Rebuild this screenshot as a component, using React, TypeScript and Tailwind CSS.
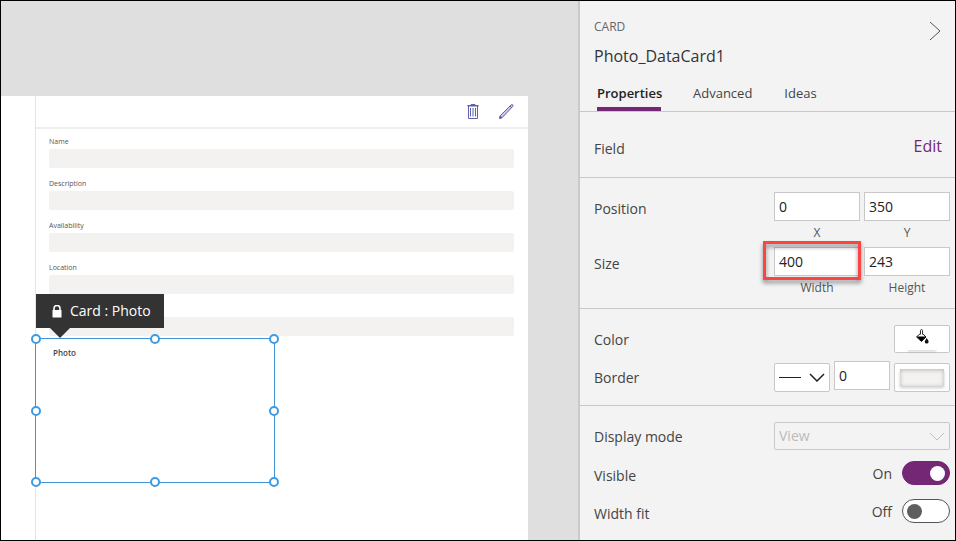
import React from "react";

const formFields = ["Name", "Description", "Availability", "Location", ""];

const handles = [
  "left-0 top-0",
  "left-1/2 top-0",
  "left-full top-0",
  "left-0 top-1/2",
  "left-full top-1/2",
  "left-0 top-full",
  "left-1/2 top-full",
  "left-full top-full",
];

function TrashIcon() {
  return (
    <svg width="12" height="15" viewBox="0 0 12 15" fill="none" stroke="#5f5fae" strokeWidth="1">
      <path d="M0.5 2h11M0.500 1.500h11M4 1.500V0.500h4v1M1.500 2v12.500h9V2M3.500 4v8.500M6 4v8.500M8.500 4v8.500" />
    </svg>
  );
}

function PencilIcon() {
  return (
    <svg width="15" height="15" viewBox="0 0 15 15" fill="none" stroke="#5f5fae" strokeWidth="1">
      <path d="M0.700 14.300l.6-2.600L12 1c.6-.6 1.300-.6 1.700-.2s.5 1.200-.1 1.800L3.200 13.600z" fill="#c9c9e6" />
      <path d="M0.700 14.300l.5-2.300 1.800 1.700zM11 2l2 2" fill="#5f5fae" />
    </svg>
  );
}

function LockIcon() {
  return (
    <svg width="10" height="13" viewBox="0 0 10 13">
      <path d="M2 6V3.500a3 3 0 0 1 6 0V6" fill="none" stroke="#fff" strokeWidth="1.600" />
      <rect x="0.500" y="5" width="9" height="7.500" rx="0.500" fill="#fff" />
    </svg>
  );
}

function PaintIcon() {
  return (
    <svg width="13" height="15" viewBox="0 0 13 15">
      <path d="M5.500 3.500L10 8l-4.500 4.500L0.500 8z" fill="#fff" stroke="#222" strokeWidth="1" />
      <path d="M4.500 5.500V1.500c0-1.300 2-1.300 2 0V5.500" fill="#fff" stroke="#333" strokeWidth="1" />
      <path d="M0.500 7.500h9.500l-4.500 5z" fill="#000" />
      <path d="M10.700 9c.8 1.500 1.900 2.500 1.900 3.700a1.900 1.900 0 0 1-3.800 0c0-1.200 1.200-2.200 1.900-3.700z" fill="#111" />
    </svg>
  );
}

function Chevron({ className }: { className: string }) {
  return (
    <svg className={className} width="16" height="9" viewBox="0 0 16 9" fill="none" stroke="currentColor">
      <path d="M1 1l7 7 7-7" />
    </svg>
  );
}

function Canvas() {
  return (
    <main className="flex min-w-0 flex-1 flex-col bg-[#dfdfdf] pt-[95px]">
      <div className="mr-[50px] flex flex-1 bg-white pl-[34px]">
        <div className="flex-1 border-l border-[#e4e4e4]">
          <div className="flex h-[33px] items-center justify-end gap-5 border-b-2 border-[#efefef] pr-[14px]">
            <button aria-label="Delete"><TrashIcon /></button>
            <button aria-label="Edit item"><PencilIcon /></button>
          </div>
          <div className="flex flex-col gap-3 pt-[9px] pr-[14px] pl-[13px]">
            {formFields.map((name, i) => (
              <label key={i} className="flex flex-col gap-[3px] text-[7px] leading-[8px] text-[#555]">
                <span className="h-2">{name}</span>
                <input readOnly aria-label={name || "Card"} className="h-[19px] w-full rounded-xs bg-[#f3f2f1]" />
              </label>
            ))}
          </div>
          <div className="relative mt-0.5 -ml-px h-[145px] w-[240px] border border-[#3f92d6] bg-white pt-2.5 pl-[17px]">
            <span className="block text-[8px] leading-[8px] font-semibold text-[#444]">Photo</span>
            {handles.map((pos) => (
              <span
                key={pos}
                className={`absolute size-[10px] -translate-1/2 rounded-full border-2 border-[#3f9ae2] bg-white ${pos}`}
              />
            ))}
            <div className="absolute bottom-full left-0 mb-[11px] flex h-[34px] w-32 items-center gap-2 bg-[#333] pl-4 text-sm text-white">
              <LockIcon />
              <span className="whitespace-nowrap">Card : Photo</span>
              <span className="absolute top-full left-[14px] border-x-[10px] border-t-[10px] border-x-transparent border-t-[#333]" />
            </div>
          </div>
        </div>
      </div>
    </main>
  );
}

function NumberField({ id, value, label, marked }: { id: string; value: string; label: string; marked?: boolean }) {
  return (
    <div className="relative w-[86px]">
      <input
        id={id}
        defaultValue={value}
        className="block h-[29px] w-full border border-[#c8c8c8] bg-white px-1 text-sm text-[#222]"
      />
      <label htmlFor={id} className="block pt-[3px] text-center text-xs leading-[17px] text-[#555]">
        {label}
      </label>
      {marked && (
        <span className="pointer-events-none absolute -top-1.5 right-[-1px] -left-[11px] h-[39px] border-3 border-[#fb4444] drop-shadow-[0_3px_2px_rgba(0,0,0,0.45)]" />
      )}
    </div>
  );
}

function Toggle({ id, label, state, on }: { id: string; label: string; state: string; on?: boolean }) {
  return (
    <div className="flex h-6 items-center">
      <label htmlFor={id} className="flex-1 pt-1.5">{label}</label>
      <span className="mr-2.5 pt-0.5">{state}</span>
      <input
        id={id}
        type="checkbox"
        role="switch"
        defaultChecked={on}
        className="flex h-6 w-12 appearance-none items-center rounded-full border border-[#555] bg-white px-1 before:size-[15px] before:rounded-full before:bg-[#605e5c] checked:justify-end checked:border-[#742774] checked:bg-[#742774] checked:before:bg-white"
      />
    </div>
  );
}

function PropertiesPanel() {
  return (
    <aside className="w-[377px] shrink-0 border-l-2 border-[#cacaca] bg-[#f3f3f3] text-sm text-[#444]">
      <header className="border-b border-[#c8c8c8]">
        <div className="flex justify-between pt-4 pr-[14px] pl-[14px]">
          <div>
            <p className="text-xs leading-5 text-[#666]">CARD</p>
            <h1 className="pt-[7px] text-base leading-6 text-[#333]">Photo_DataCard1</h1>
          </div>
          <button aria-label="Collapse panel" className="mt-1 h-5 text-[#555]">
            <svg width="12" height="20" viewBox="0 0 12 20" fill="none" stroke="currentColor">
              <path d="M1 1l10 9-10 9" />
            </svg>
          </button>
        </div>
        <nav className="flex pt-4 pl-[17px] text-[13px] leading-[18px]">
          <button className="mr-8 h-[27px] w-16 border-b-4 border-[#742774] pb-[5px] text-left font-semibold whitespace-nowrap text-[#222]">Properties</button>
          <button className="mr-8 h-[27px] pb-[9px]">Advanced</button>
          <button className="h-[27px] pb-[9px]">Ideas</button>
        </nav>
      </header>

      <section className="flex h-[66px] items-center justify-between border-b border-[#c8c8c8] pr-[13px] pl-[14px]">
        <span className="pt-2">Field</span>
        <button className="pt-0.5 text-base text-[#742774]">Edit</button>
      </section>

      <section className="flex flex-col gap-1.5 border-b border-[#c8c8c8] pt-[14px] pr-[5px] pb-3 pl-[14px]">
        <div className="flex gap-1">
          <span className="flex-1 pt-[7px]">Position</span>
          <NumberField id="pos-x" value="0" label="X" />
          <NumberField id="pos-y" value="350" label="Y" />
        </div>
        <div className="flex gap-1">
          <span className="flex-1 pt-[7px]">Size</span>
          <NumberField id="size-w" value="400" label="Width" marked />
          <NumberField id="size-h" value="243" label="Height" />
        </div>
      </section>

      <section className="flex flex-col gap-2 border-b border-[#c8c8c8] pt-4 pr-[5px] pb-[13px] pl-[14px]">
        <div className="flex">
          <span className="flex-1 pt-[5px]">Color</span>
          <button aria-label="Fill color" className="flex h-7 w-14 flex-col items-center rounded-xs border border-[#c8c8c8] bg-white pt-[3px]">
            <PaintIcon />
            <span className="mt-0.5 h-1 w-7 shadow-[0_2px_2px_rgba(0,0,0,0.12)]" />
          </button>
        </div>
        <div className="flex gap-1">
          <label htmlFor="border-style" className="flex-1 pt-[7px]">Border</label>
          <div className="relative mt-0.5 h-[29px] w-14">
            <select id="border-style" className="size-full appearance-none rounded-xs border border-[#c8c8c8] bg-white text-transparent">
              <option>Solid</option>
            </select>
            <span className="pointer-events-none absolute top-[14px] left-[5px] h-px w-[22px] bg-[#222]" />
            <Chevron className="pointer-events-none absolute top-[10px] right-[5px] stroke-[1.5] text-[#222]" />
          </div>
          <input aria-label="Border width" defaultValue="0" className="h-[29px] w-14 border border-[#c8c8c8] bg-white px-1 text-[#222]" />
          <button aria-label="Border color" className="mt-0.5 h-[29px] w-14 rounded-xs border border-[#c8c8c8] bg-white p-[5px]">
            <span className="block size-full bg-[#f3f2f1] shadow-[0_2px_3px_rgba(0,0,0,0.2),inset_0_1px_4px_rgba(0,0,0,0.25)]" />
          </button>
        </div>
      </section>

      <section className="flex flex-col gap-[14px] pt-4 pr-[5px] pb-3 pl-[14px]">
        <div className="-mb-[3px] flex">
          <label htmlFor="display-mode" className="flex-1 pt-[5px]">Display mode</label>
          <div className="relative h-7 w-[176px]">
            <select id="display-mode" disabled className="size-full appearance-none rounded-xs border border-[#c8c8c8] px-1 text-[#bbb] opacity-100">
              <option>View</option>
            </select>
            <Chevron className="pointer-events-none absolute top-[10px] right-[5px] text-[#c0c0c0]" />
          </div>
        </div>
        <Toggle id="visible" label="Visible" state="On" on />
        <Toggle id="width-fit" label="Width fit" state="Off" />
      </section>
    </aside>
  );
}

export default function App() {
  return (
    <div className="flex min-h-screen border border-black bg-white font-['Open_Sans','Noto_Sans',sans-serif]">
      <Canvas />
      <PropertiesPanel />
    </div>
  );
}
